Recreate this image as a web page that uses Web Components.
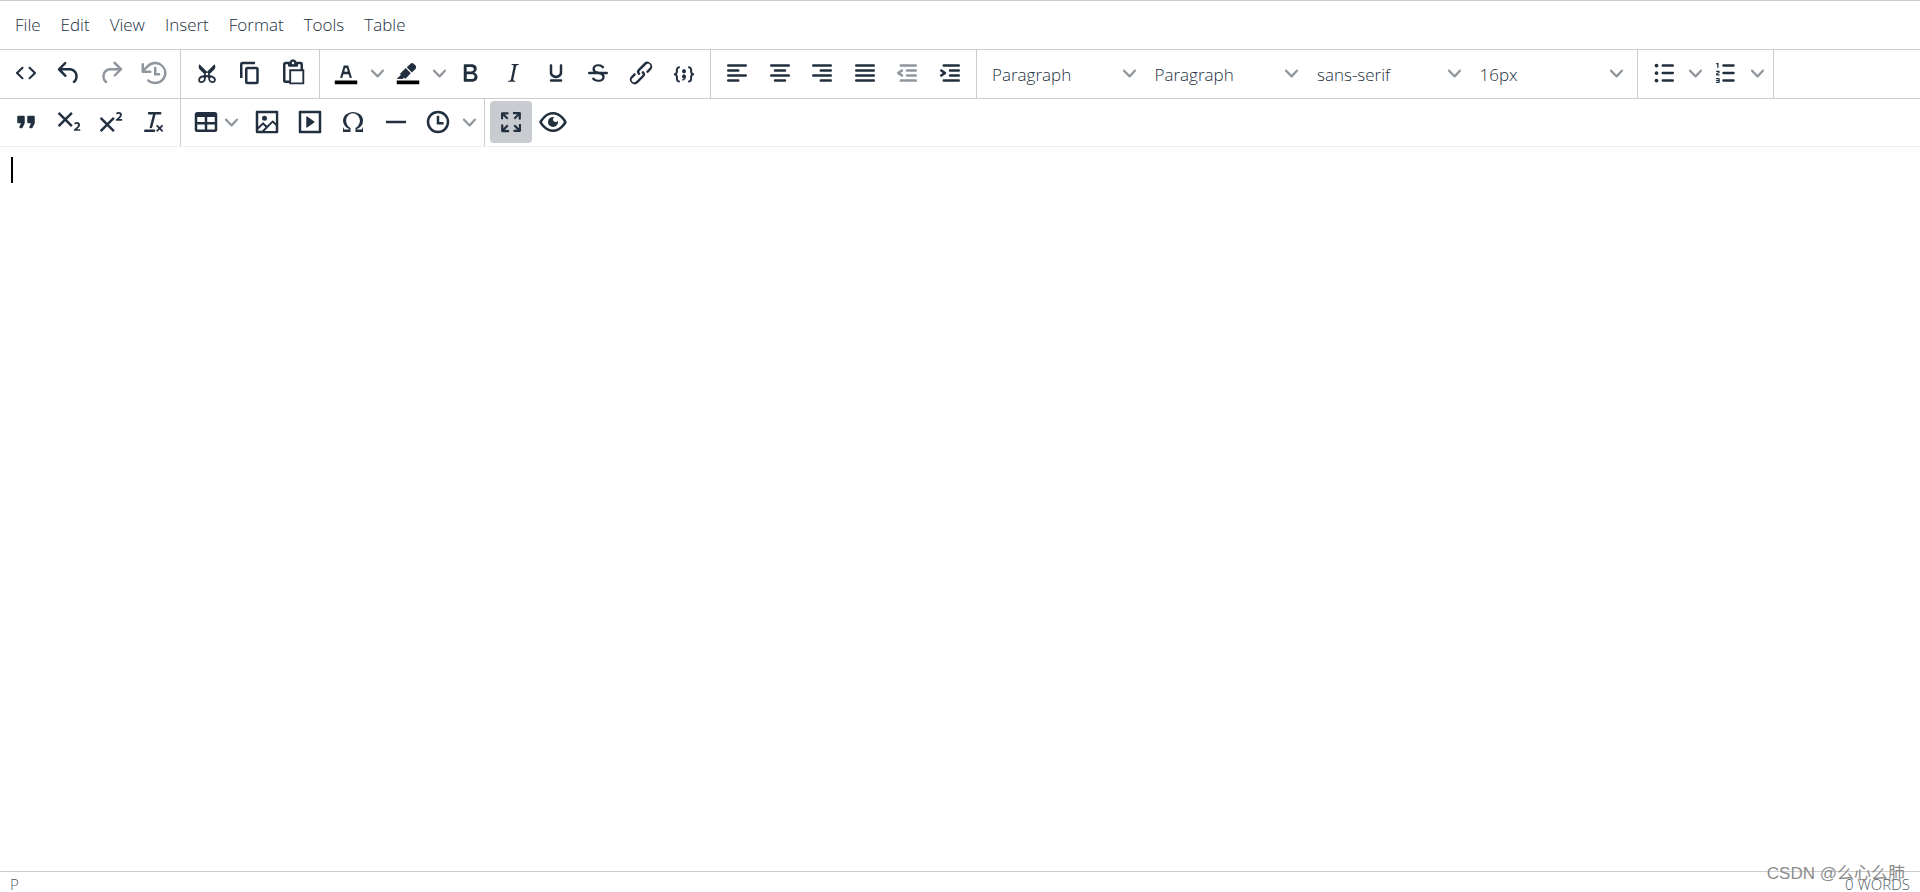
<!DOCTYPE html>
<html lang="en">
<head>
<meta charset="utf-8">
<title>Editor</title>
<style>
html, body { height: 100%; margin: 0; }
body { background: #fff; color: #222f3e; font-family: "Open Sans", "Noto Sans CJK SC", sans-serif; font-size: 17px; }
</style>
</head>
<body>
<rich-editor>
  <editor-menubar slot="menu">
    <menu-item>File</menu-item><menu-item>Edit</menu-item><menu-item>View</menu-item><menu-item>Insert</menu-item><menu-item>Format</menu-item><menu-item>Tools</menu-item><menu-item>Table</menu-item>
  </editor-menubar>
  <tool-row slot="tools">
    <tool-group style="--group-width:181px">
      <tool-button icon="code" label="Source code"></tool-button>
      <tool-button icon="undo" label="Undo"></tool-button>
      <tool-button icon="redo" label="Redo" disabled></tool-button>
      <tool-button icon="restore" label="Restore last draft" disabled></tool-button>
    </tool-group>
    <tool-group style="--group-width:139px">
      <tool-button icon="cut" label="Cut"></tool-button>
      <tool-button icon="copy" label="Copy"></tool-button>
      <tool-button icon="paste" label="Paste"></tool-button>
    </tool-group>
    <tool-group style="--group-width:391px">
      <tool-split icon="color" label="Text color"></tool-split>
      <tool-split icon="highlight" label="Background color"></tool-split>
      <tool-button icon="bold" label="Bold"></tool-button>
      <tool-button icon="italic" label="Italic"></tool-button>
      <tool-button icon="underline" label="Underline"></tool-button>
      <tool-button icon="strike" label="Strikethrough"></tool-button>
      <tool-button icon="link" label="Insert link"></tool-button>
      <tool-button icon="sample" label="Code sample"></tool-button>
    </tool-group>
    <tool-group style="--group-width:266px">
      <tool-button icon="left" label="Align left"></tool-button>
      <tool-button icon="center" label="Align center"></tool-button>
      <tool-button icon="right" label="Align right"></tool-button>
      <tool-button icon="justify" label="Justify"></tool-button>
      <tool-button icon="outdent" label="Decrease indent" disabled></tool-button>
      <tool-button icon="indent" label="Increase indent"></tool-button>
    </tool-group>
    <tool-group style="--group-width:661px">
      <tool-select label="Styles" value="Paragraph"></tool-select>
      <tool-select label="Blocks" value="Paragraph"></tool-select>
      <tool-select label="Fonts" value="sans-serif"></tool-select>
      <tool-select label="Font sizes" value="16px"></tool-select>
    </tool-group>
    <tool-group style="--group-width:136px">
      <tool-split icon="bullets" label="Bullet list"></tool-split>
      <tool-split icon="numbers" label="Numbered list"></tool-split>
    </tool-group>
  </tool-row>
  <tool-row slot="tools" last>
    <tool-group style="--group-width:181px">
      <tool-button icon="quote" label="Blockquote"></tool-button>
      <tool-button icon="sub" label="Subscript"></tool-button>
      <tool-button icon="sup" label="Superscript"></tool-button>
      <tool-button icon="clear" label="Clear formatting"></tool-button>
    </tool-group>
    <tool-group style="--group-width:304px">
      <tool-menu icon="table" label="Table"></tool-menu>
      <tool-button icon="image" label="Insert image"></tool-button>
      <tool-button icon="media" label="Insert media"></tool-button>
      <tool-button icon="omega" label="Special character"></tool-button>
      <tool-button icon="rule" label="Horizontal line"></tool-button>
      <tool-split icon="clock" label="Insert date/time"></tool-split>
    </tool-group>
    <tool-group open-end style="--group-width:94px">
      <tool-button icon="fullscreen" label="Fullscreen" pressed></tool-button>
      <tool-button icon="preview" label="Preview"></tool-button>
    </tool-group>
  </tool-row>
  <editor-canvas></editor-canvas>
  <editor-status slot="status"><span>P</span><span slot="count">0 WORDS</span><span slot="mark">CSDN @么心么肺</span></editor-status>
</rich-editor>

<script>
const line = (...rows) => `<path fill="none" stroke="currentColor" stroke-width="2" stroke-linecap="round" d="${rows.join('')}"/>`;
const shape = d => `<path fill-rule="evenodd" d="${d}"/>`;
const ICONS = {
  code: shape('M9.8 15.7c.3.3.3.8 0 1-.3.4-.9.4-1.2 0l-4.4-4.1a.8.8 0 0 1 0-1.2l4.4-4.2c.3-.3.9-.3 1.2 0 .3.3.3.8 0 1.1L6 12l3.8 3.7ZM14.2 15.7c-.3.3-.3.8 0 1 .4.4.9.4 1.2 0l4.4-4.1c.3-.3.3-.9 0-1.2l-4.4-4.2a.8.8 0 0 0-1.2 0c-.3.3-.3.8 0 1.1L18 12l-3.8 3.7Z'),
  undo: shape('M6.4 8H12c3.7 0 6.2 2 6.8 5.1.6 2.7-.4 5.6-2.3 6.8a1 1 0 0 1-1-1.8c1.1-.6 1.8-2.7 1.4-4.6-.5-2.1-2.1-3.5-4.9-3.5H6.4l3.3 3.3a1 1 0 1 1-1.4 1.4l-5-5a1 1 0 0 1 0-1.4l5-5a1 1 0 0 1 1.4 1.4L6.4 8Z'),
  redo: shape('M17.6 10H12c-2.8 0-4.4 1.4-4.9 3.5-.4 2 .3 4 1.4 4.6a1 1 0 1 1-1 1.8c-2-1.2-2.9-4.1-2.3-6.8.6-3 3-5.1 6.8-5.1h5.6l-3.3-3.3a1 1 0 1 1 1.4-1.4l5 5a1 1 0 0 1 0 1.4l-5 5a1 1 0 0 1-1.4-1.4l3.3-3.3Z'),
  restore: shape('M17 13c0 .6-.4 1-1 1h-4V8c0-.6.4-1 1-1s1 .4 1 1v4h2c.6 0 1 .4 1 1Z') + shape('M4.7 10H9a1 1 0 0 1 0 2H3a1 1 0 0 1-1-1V5a1 1 0 1 1 2 0v3l2.5-2.4a9.2 9.2 0 0 1 10.8-1.5A9 9 0 0 1 13.4 21c-2.4.1-4.7-.7-6.5-2.2a1 1 0 1 1 1.3-1.5 7.2 7.2 0 0 0 11.6-3.7 7 7 0 0 0-3.5-7.7A7.2 7.2 0 0 0 8 7L4.7 10Z'),
  cut: shape('M18 15c.6.7 1 1.4 1 2.3 0 .8-.2 1.5-.7 2l-.8.5-1 .2c-.4 0-.8 0-1.2-.3a3.9 3.9 0 0 1-2.1-2.2c-.2-.5-.3-1-.2-1.5l-1-1-1 1c0 .5 0 1-.2 1.5-.1.5-.4 1-.9 1.4-.3.4-.7.6-1.2.8l-1.2.3c-.4 0-.7 0-1-.2-.3 0-.6-.3-.8-.5-.5-.5-.8-1.2-.7-2 0-.9.4-1.6 1-2.2A3.7 3.7 0 0 1 8.6 14H9l1-1-4-4-.5-1a3.3 3.3 0 0 1 0-2c0-.4.3-.7.5-1l6 6 6-6 .5 1a3.3 3.3 0 0 1 0 2c0 .4-.3.7-.5 1l-4 4 1 1h.5c.4 0 .8 0 1.2.3.5.2.9.4 1.2.8ZM9.5 17.2l.1-.7c0-.6-.5-1-1.1-1-.9 0-2.1 1-2.1 2.1 0 .6.4 1 1 1 .9 0 1.8-.5 2.1-1.4ZM14.5 17.2l-.1-.7c0-.6.5-1 1.1-1 .9 0 2.1 1 2.1 2.1 0 .6-.4 1-1 1-.9 0-1.8-.5-2.1-1.4ZM12 11.8a1 1 0 1 0 0 2 1 1 0 0 0 0-2Z'),
  copy: shape('M16 3H6a2 2 0 0 0-2 2v11h2V5h10V3Zm1 4a2 2 0 0 1 2 2v10a2 2 0 0 1-2 2h-7a2 2 0 0 1-2-2V9c0-1.2.9-2 2-2h7Zm0 12V9h-7v10h7Z'),
  paste: shape('M18 9V5h-2v1c0 .6-.4 1-1 1H9a1 1 0 0 1-1-1V5H6v13h3V9h9ZM9 20H6a2 2 0 0 1-2-2V5c0-1.1.9-2 2-2h3.2A3 3 0 0 1 12 1a3 3 0 0 1 2.8 2H18a2 2 0 0 1 2 2v4h1v12H9v-1Zm1.5-9.5v9h9v-9h-9ZM12 3a1 1 0 0 0-1 1c0 .5.4 1 1 1s1-.5 1-1-.4-1-1-1Z'),
  color: '<path fill="#000" d="M3 18h18v3H3z"/>' + shape('M8.7 16h-.8a.5.5 0 0 1-.5-.6l2.7-9c.1-.3.3-.4.5-.4h2.8c.2 0 .4.1.5.4l2.7 9a.5.5 0 0 1-.5.6h-.8a.5.5 0 0 1-.4-.4l-.7-2.2c0-.3-.3-.4-.5-.4h-3.4c-.2 0-.4.1-.5.4l-.7 2.2c0 .3-.2.4-.4.4Zm2.6-7.6-.6 2a.5.5 0 0 0 .5.6h1.6a.5.5 0 0 0 .5-.6l-.6-2c0-.3-.3-.4-.5-.4h-.4c-.2 0-.4.1-.5.4Z'),
  highlight: '<path fill="#000" d="M3 18h18v3H3z"/>' + shape('M7.7 16.7H3l3.3-3.3-.7-.8L10.2 8l4 4.1-4 4.2c-.2.2-.6.2-.8 0l-.6-.7-1.1 1.1Zm5-7.5L11 7.4l3-2.9a2 2 0 0 1 2.6 0L18 6c.7.7.7 2 0 2.7l-2.9 2.9-1.8-1.8-.5-.6Z'),
  bold: shape('M7.8 19c-.3 0-.5 0-.6-.2l-.2-.5V5.7c0-.2 0-.4.2-.5l.6-.2h5c1.5 0 2.7.3 3.5 1 .7.6 1.1 1.4 1.1 2.5a3 3 0 0 1-.6 1.9c-.4.6-1 1-1.6 1.2.4.1.9.3 1.3.6s.8.7 1 1.2c.4.4.5 1 .5 1.6 0 1.3-.4 2.3-1.3 3-.8.7-2.1 1-3.8 1H7.8Zm5-8.3c.6 0 1.2-.1 1.6-.5.4-.3.6-.7.6-1.3 0-1.1-.8-1.7-2.3-1.7H9.3v3.5h3.4Zm.5 6c.7 0 1.3-.1 1.7-.4.4-.4.6-.9.6-1.5s-.2-1-.7-1.4c-.4-.3-1-.4-2-.4H9.4v3.8h4Z'),
  italic: shape('m16.7 4.7-.1.9h-.3c-.6 0-1 0-1.4.3-.3.3-.4.6-.5 1.1l-2.1 9.8v.6c0 .5.4.8 1.4.8h.2l-.2.8H8l.2-.8h.2c1.1 0 1.8-.5 2-1.5l2-9.8.1-.5c0-.6-.4-.8-1.4-.8h-.3l.2-.9h5.8Z'),
  underline: shape('M16 5c.6 0 1 .4 1 1v5.5a4 4 0 0 1-.4 1.8l-1 1.4a5.3 5.3 0 0 1-5.5 1 5 5 0 0 1-1.6-1c-.5-.4-.8-.9-1.1-1.4a4 4 0 0 1-.4-1.8V6c0-.6.4-1 1-1s1 .4 1 1v5.5c0 .3 0 .6.2 1l.6.7a3.3 3.3 0 0 0 2.2.8 3.4 3.4 0 0 0 2.2-.8c.3-.2.4-.5.6-.8l.2-.9V6c0-.6.4-1 1-1ZM8 17h8c.6 0 1 .4 1 1s-.4 1-1 1H8a1 1 0 0 1 0-2Z'),
  strike: shape('M15.6 8.5c-.5-.7-1-1.1-1.3-1.3-.6-.4-1.3-.6-2-.6-2.7 0-2.8 1.7-2.8 2.1 0 1.6 1.8 2 3.2 2.3 4.4.9 4.6 2.8 4.6 3.9 0 1.4-.7 4.1-5 4.1A6.2 6.2 0 0 1 7 16.4l1.5-1.1c.4.6 1.6 2 3.7 2 1.6 0 2.5-.4 3-1.2.4-.8.3-2-.8-2.6-.7-.4-1.6-.7-2.9-1-1-.2-3.9-.8-3.9-3.6C7.6 6 10.3 5 12.4 5c2.9 0 4.2 1.6 4.7 2.4l-1.5 1.1Z') + shape('M5 11h14a1 1 0 0 1 0 2H5a1 1 0 0 1 0-2Z'),
  link: shape('M6.2 12.3a1 1 0 0 1 1.4 1.4l-2 2a2 2 0 1 0 2.6 2.8l4.8-4.8a1 1 0 0 0 0-1.4 1 1 0 1 1 1.4-1.3 2.9 2.9 0 0 1 0 4L9.6 20a3.9 3.9 0 0 1-5.5-5.5l2-2Zm11.6-.6a1 1 0 0 1-1.4-1.4l2-2a2 2 0 1 0-2.6-2.8L11 10.3a1 1 0 0 0 0 1.4A1 1 0 1 1 9.6 13a2.9 2.9 0 0 1 0-4L14.4 4a3.9 3.9 0 0 1 5.5 5.5l-2 2Z'),
  sample: shape('M7.1 11a2.8 2.8 0 0 1-.8 2 2.8 2.8 0 0 1 .8 2v1.7c0 .3.1.6.4.8.2.3.5.4.8.4.3 0 .4.2.4.4v.8c0 .2-.1.4-.4.4-.7 0-1.4-.3-2-.8-.5-.6-.8-1.3-.8-2V15c0-.3-.1-.6-.4-.8-.2-.3-.5-.4-.8-.4a.4.4 0 0 1-.4-.4v-.8c0-.2.2-.4.4-.4.3 0 .6-.1.8-.4.3-.2.4-.5.4-.8V9.3c0-.7.3-1.4.8-2 .6-.5 1.3-.8 2-.8.3 0 .4.2.4.4v.8c0 .2-.1.4-.4.4-.3 0-.6.1-.8.4-.3.2-.4.5-.4.8V11Zm9.8 0V9.3c0-.3-.1-.6-.4-.8-.2-.3-.5-.4-.8-.4a.4.4 0 0 1-.4-.4V7c0-.2.1-.4.4-.4.7 0 1.4.3 2 .8.5.6.8 1.3.8 2V11c0 .3.1.6.4.8.2.3.5.4.8.4.2 0 .4.2.4.4v.8c0 .2-.2.4-.4.4-.3 0-.6.1-.8.4-.3.2-.4.5-.4.8v1.7c0 .7-.3 1.4-.8 2-.6.5-1.3.8-2 .8a.4.4 0 0 1-.4-.4v-.8c0-.2.1-.4.4-.4.3 0 .6-.1.8-.4.3-.2.4-.5.4-.8V15a2.8 2.8 0 0 1 .8-2 2.8 2.8 0 0 1-.8-2Zm-3.3-.4c0 .4-.1.8-.5 1.1-.3.3-.7.5-1.1.5-.4 0-.8-.2-1.1-.5-.4-.3-.5-.7-.5-1.1 0-.5.1-.9.5-1.2.3-.3.7-.4 1.1-.4.4 0 .8.1 1.1.4.4.3.5.7.5 1.2ZM12 13c.4 0 .8.1 1.1.5.4.3.5.7.5 1.1 0 1-.1 1.6-.5 2a3 3 0 0 1-1.1 1c-.4.3-.8.4-1.1.4a.5.5 0 0 1-.5-.5V17a3 3 0 0 0 1-.2l.6-.6c-.6 0-1-.2-1.3-.5-.2-.3-.3-.7-.3-1 0-.5.1-1 .5-1.2.3-.4.7-.5 1.1-.5Z'),
  left: line('M5 6h14', 'M5 10h8', 'M5 14h14', 'M5 18h8'),
  center: line('M5 6h14', 'M8 10h8', 'M5 14h14', 'M8 18h8'),
  right: line('M5 6h14', 'M11 10h8', 'M5 14h14', 'M11 18h8'),
  justify: line('M5 6h14', 'M5 10h14', 'M5 14h14', 'M5 18h14'),
  outdent: line('M7 6h12', 'M12 10h7', 'M12 14h7', 'M7 18h12') + shape('M8.6 13.2a1 1 0 0 1-1.2 1.6l-3-2a1 1 0 0 1 0-1.6l3-2a1 1 0 0 1 1.2 1.6L6.8 12l1.8 1.2Z'),
  indent: line('M7 6h12', 'M12 10h7', 'M12 14h7', 'M7 18h12') + shape('M4.4 13.2 6.2 12l-1.8-1.2a1 1 0 0 1 1.2-1.6l3 2a1 1 0 0 1 0 1.6l-3 2a1 1 0 1 1-1.2-1.6Z'),
  bullets: line('M11 6h8', 'M11 12h8', 'M11 18h8') + '<circle cx="6" cy="6" r="1.5"/><circle cx="6" cy="12" r="1.5"/><circle cx="6" cy="18" r="1.5"/>',
  numbers: line('M10 6h8', 'M10 12h8', 'M10 18h8') + shape('M6 4v3.5c0 .3-.2.5-.5.5a.5.5 0 0 1-.5-.5V5h-.5a.5.5 0 0 1 0-1H6Zm-1 8.8.2.2h1.3c.3 0 .5.2.5.5s-.2.5-.5.5H4.9a1 1 0 0 1-.9-1V13c0-.4.3-.8.6-1l1.2-.4.2-.3a.2.2 0 0 0-.2-.2H4.5a.5.5 0 0 1-.5-.5c0-.3.2-.5.5-.5h1.6c.5 0 .9.4.9 1v.1c0 .4-.3.8-.6 1l-1.2.4-.2.3ZM7 17v2c0 .6-.4 1-1 1H4.5a.5.5 0 0 1 0-1h1.2c.2 0 .3-.1.3-.3 0-.2-.1-.3-.3-.3H4.4a.4.4 0 1 1 0-.8h1.3c.2 0 .3-.1.3-.3 0-.2-.1-.3-.3-.3H4.5a.5.5 0 1 1 0-1H6c.6 0 1 .4 1 1Z'),
  quote: shape('M7.5 17h.9c.4 0 .7-.2.9-.6L11 13V8c0-.6-.4-1-1-1H6a1 1 0 0 0-1 1v4c0 .6.4 1 1 1h2l-1.3 2.7a1 1 0 0 0 .8 1.3Zm8 0h.9c.4 0 .7-.2.9-.6L19 13V8c0-.6-.4-1-1-1h-4a1 1 0 0 0-1 1v4c0 .6.4 1 1 1h2l-1.3 2.7a1 1 0 0 0 .8 1.3Z'),
  sub: shape('m10.4 10 4.6 4.6-1.4 1.4L9 11.4 4.4 16 3 14.6 7.6 10 3 5.4 4.4 4 9 8.6 13.6 4 15 5.4 10.4 10ZM21 19h-5v-1l1-.8 1.7-1.6c.3-.4.5-.8.5-1.2 0-.3 0-.6-.2-.7-.2-.2-.5-.3-.9-.3a2 2 0 0 0-.8.2l-.7.3-.4-1.1 1-.6 1.2-.2c.8 0 1.4.3 1.8.7.4.4.6.9.6 1.5s-.2 1.1-.5 1.6a8 8 0 0 1-1.3 1.3l-.6.6h2.6V19Z'),
  sup: shape('M15 9.4 10.4 14l4.6 4.6-1.4 1.4L9 15.4 4.4 20 3 18.6 7.6 14 3 9.4 4.4 8 9 12.6 13.6 8 15 9.4Zm5.9 1.6h-5v-1l1-.8 1.7-1.6c.3-.5.5-.9.5-1.3 0-.3 0-.5-.2-.7-.2-.2-.5-.3-.9-.3l-.8.2-.7.4-.4-1.2c.2-.2.5-.4 1-.5.3-.2.8-.2 1.2-.2.8 0 1.4.2 1.8.6.4.4.6 1 .6 1.6 0 .5-.2 1-.5 1.5l-1.3 1.4-.6.5h2.6V11Z'),
  clear: shape('M13.2 6a1 1 0 0 1 0 .2l-2.6 10a1 1 0 0 1-1 .8h-.2a.8.8 0 0 1-.8-1l2.6-10H8a1 1 0 1 1 0-2h9a1 1 0 0 1 0 2h-3.8ZM5 18h7a1 1 0 0 1 0 2H5a1 1 0 0 1 0-2Zm13 1.5L16.5 18 15 19.5a.7.7 0 0 1-1-1l1.5-1.5-1.5-1.5a.7.7 0 0 1 1-1l1.5 1.5 1.5-1.5a.7.7 0 0 1 1 1L17.5 17l1.5 1.5a.7.7 0 0 1-1 1Z'),
  table: shape('M19 4a2 2 0 0 1 2 2v12a2 2 0 0 1-2 2H5a2 2 0 0 1-2-2V6c0-1.1.9-2 2-2h14ZM5 14v4h6v-4H5Zm14 0h-6v4h6v-4Zm0-6h-6v4h6V8ZM5 12h6V8H5v4Z'),
  image: shape('m5 15.7 3.3-3.2c.3-.3.7-.3 1 0L12 15l4.1-4c.3-.4.8-.4 1 0l2 1.9V5H5v10.7ZM5 18V19h3l2.8-2.9-2-2L5 17.9Zm14-3-2.5-2.4-6.4 6.5H19v-4ZM4 3h16c.6 0 1 .4 1 1v16c0 .6-.4 1-1 1H4a1 1 0 0 1-1-1V4c0-.6.4-1 1-1Zm6 8a2 2 0 1 0 0-4 2 2 0 0 0 0 4Z'),
  media: shape('M4 3h16c.6 0 1 .4 1 1v16c0 .6-.4 1-1 1H4a1 1 0 0 1-1-1V4c0-.6.4-1 1-1Zm1 2v14h14V5H5Zm4.8 2.6 5.6 4a.5.5 0 0 1 0 .8l-5.6 4A.5.5 0 0 1 9 16V8a.5.5 0 0 1 .8-.4Z'),
  omega: shape('M15 18h4l1-2v4h-6v-3.3l1.4-1a6 6 0 0 0 1.8-2.9 6.3 6.3 0 0 0-.1-4.1 5.8 5.8 0 0 0-3-3.2c-.6-.3-1.3-.5-2.1-.5a5.1 5.1 0 0 0-3.9 1.8 6.3 6.3 0 0 0-1.3 6 6.2 6.2 0 0 0 1.8 3l1.4.9V20H4v-4l1 2h4v-.5l-2-1L5.4 15A6.5 6.5 0 0 1 4 11c0-1 .2-1.9.6-2.7A7 7 0 0 1 6.3 6C7.1 5.4 8 5 9 4.5c1-.3 2-.5 3.1-.5a8.8 8.8 0 0 1 5.7 2 7 7 0 0 1 1.7 2.3 6 6 0 0 1 .2 4.8c-.2.7-.6 1.3-1 1.9a7.6 7.6 0 0 1-3.6 2.5v.5Z'),
  rule: shape('M4 11h16v2H4z'),
  clock: shape('M12 19a7 7 0 1 0 0-14 7 7 0 0 0 0 14Zm0 2a9 9 0 1 1 0-18 9 9 0 0 1 0 18Z') + shape('M16 12h-3V7.5c0-.3-.2-.5-.5-.5h-1a.5.5 0 0 0-.5.5v6c0 .3.2.5.5.5H16c.3 0 .5-.2.5-.5v-1c0-.3-.2-.5-.5-.5Z'),
  fullscreen: shape('m15.3 10-1.2-1.3 2.9-3h-2.3a.9.9 0 1 1 0-1.7H19c.5 0 .9.4.9.9v4.4a.9.9 0 1 1-1.8 0V7l-2.9 3Zm0 4 3 3v-2.3a.9.9 0 1 1 1.7 0V19c0 .5-.4.9-.9.9h-4.4a.9.9 0 1 1 0-1.8H17l-3-2.9 1.3-1.2ZM10 15.4l-2.9 3h2.3a.9.9 0 1 1 0 1.7H5a.9.9 0 0 1-.9-.9v-4.4a.9.9 0 1 1 1.8 0V17l2.9-3 1.2 1.3ZM8.7 10 5.7 7v2.3a.9.9 0 0 1-1.7 0V5c0-.5.4-.9.9-.9h4.4a.9.9 0 0 1 0 1.8H7l3 2.9-1.3 1.2Z'),
  preview: shape('M3.5 12.5c.5.8 1.1 1.6 1.8 2.3 2 2 4.2 3.2 6.7 3.2s4.7-1.2 6.7-3.2a16.2 16.2 0 0 0 2.1-2.8 15.7 15.7 0 0 0-2.1-2.8c-2-2-4.2-3.2-6.7-3.2a9.3 9.3 0 0 0-6.7 3.2A16.2 16.2 0 0 0 3.2 12c0 .2.2.3.3.5Zm-2.4-1 .7-1.2L4 7.8C6.2 5.4 8.9 4 12 4c3 0 5.8 1.4 8.1 3.8a18.2 18.2 0 0 1 2.8 3.7v1l-.7 1.2a18.1 18.1 0 0 1-2.1 2.5c-2.3 2.4-5 3.8-8.1 3.8-3 0-5.8-1.4-8.1-3.8a18.2 18.2 0 0 1-2.8-3.7 1 1 0 0 1 0-1Zm12-3.3a2 2 0 1 0 2.7 2.6 4 4 0 1 1-2.6-2.6Z')
};
const icon = name => `<svg class="icon" viewBox="0 0 24 24" fill="currentColor" aria-hidden="true">${ICONS[name]}</svg>`;
const CHEVRON = '<svg class="chevron" viewBox="0 0 10 10" fill="currentColor" aria-hidden="true"><path d="M8.7 2.2c.3-.3.8-.3 1 0 .4.4.4.9 0 1.2L5.7 7.8c-.3.3-.9.3-1.2 0L.2 3.4a.8.8 0 0 1 0-1.2c.3-.3.8-.3 1.1 0L5 6l3.7-3.8Z"/></svg>';
const CONTROL = `
  :host { display: flex; height: 42px; min-width: 0; }
  button { appearance: none; display: flex; align-items: center; justify-content: center; height: 42px; margin: 0; padding: 0; border: 0; border-radius: 4px; background: none; color: inherit; font: inherit; }
  .icon { display: block; flex: none; width: 30px; height: 30px; }
  .chevron { display: block; flex: none; width: 13px; height: 13px; opacity: .5; }`;

function define(name, render) {
  customElements.define(name, class extends HTMLElement {
    constructor() { super(); this.attachShadow({ mode: 'open' }); }
    connectedCallback() { this.shadowRoot.innerHTML = render(this); }
  });
}

define('rich-editor', () => `<style>
  :host { display: flex; flex-direction: column; min-height: 100vh; box-sizing: border-box; border-top: 1px solid #ccc; }
  main { flex: 1; display: flex; }
</style><slot name="menu"></slot><slot name="tools"></slot><main><slot></slot></main><slot name="status"></slot>`);

define('editor-menubar', () => `<style>
  :host { display: block; border-bottom: 1px solid #ccc; }
  nav { display: flex; align-items: center; height: 48px; padding: 0 5px; }
</style><nav aria-label="Menu"><slot></slot></nav>`);

define('menu-item', () => `<style>
  :host { display: block; }
  button { appearance: none; margin: 0; padding: 0 10px; border: 0; background: none; color: inherit; font: inherit; font-weight: 300; line-height: 42px; }
</style><button type="button"><slot></slot></button>`);

define('tool-row', () => `<style>
  :host { display: flex; flex-wrap: wrap; min-height: 48px; border-bottom: 1px solid #ccc; }
  :host([last]) { min-height: 47px; border-bottom-color: #eee; }
</style><slot></slot>`);

define('tool-group', () => `<style>
  :host { display: flex; box-sizing: border-box; width: var(--group-width); padding: 2px 5px 3px; border-right: 1px solid #ccc; }
  :host([open-end]) { border-right: 0; }
</style><slot></slot>`);

define('tool-button', el => `<style>${CONTROL}
  :host { flex: 1 1 0; }
  button { flex: 1; }
  button:disabled { opacity: .5; }
  button[aria-pressed="true"] { background: #c8cbcf; }
</style><button type="button" aria-label="${el.getAttribute('label')}" ${el.hasAttribute('disabled') ? 'disabled' : ''} ${el.hasAttribute('pressed') ? 'aria-pressed="true"' : ''}>${icon(el.getAttribute('icon'))}</button>`);

define('tool-split', el => `<style>${CONTROL}
  :host { flex: 0 0 62px; }
  .main { flex: 1; }
  .more { width: 20px; }
</style><button class="main" type="button" aria-label="${el.getAttribute('label')}">${icon(el.getAttribute('icon'))}</button><button class="more" type="button" aria-label="${el.getAttribute('label')} options">${CHEVRON}</button>`);

define('tool-menu', el => `<style>${CONTROL}
  :host { flex: 0 0 60px; }
  button { flex: 1; justify-content: flex-start; gap: 4px; padding-left: 5px; }
</style><button type="button" aria-haspopup="true" aria-label="${el.getAttribute('label')}">${icon(el.getAttribute('icon'))}${CHEVRON}</button>`);

define('tool-select', el => `<style>${CONTROL}
  :host { flex: 1 1 0; }
  label { flex: 1; display: grid; grid-template-columns: 1fr 22px; align-items: center; min-width: 0; }
  select { appearance: none; grid-area: 1 / 1 / 2 / 3; width: 100%; height: 42px; margin: 0; padding: 2px 30px 0 10px; border: 0; background: none; color: inherit; font: inherit; font-weight: 300; }
  .chevron { grid-area: 1 / 2; pointer-events: none; }
</style><label><select aria-label="${el.getAttribute('label')}"><option>${el.getAttribute('value')}</option></select>${CHEVRON}</label>`);

define('editor-canvas', () => `<style>
  :host { display: flex; flex: 1; }
  div { flex: 1; padding: 10px 11px; outline: 0; }
  span { display: block; width: 2px; height: 26px; background: #000; }
</style><div role="textbox" aria-multiline="true" aria-label="Rich text area" tabindex="0"><span></span></div>`);

define('editor-status', () => `<style>
  :host { display: block; position: relative; border-top: 1px solid #ccc; font-size: 15px; font-weight: 300; line-height: 24px; }
  footer { display: flex; justify-content: space-between; height: 20px; padding: 0 10px; overflow: hidden; color: #4e5865; }
  .mark { position: absolute; right: 15px; bottom: 6px; font: 17px/24px "Liberation Sans", "Noto Sans CJK SC", sans-serif; color: #8c8c8c; }
</style><footer><slot></slot><slot name="count"></slot></footer><div class="mark"><slot name="mark"></slot></div>`);
</script>
</body>
</html>
